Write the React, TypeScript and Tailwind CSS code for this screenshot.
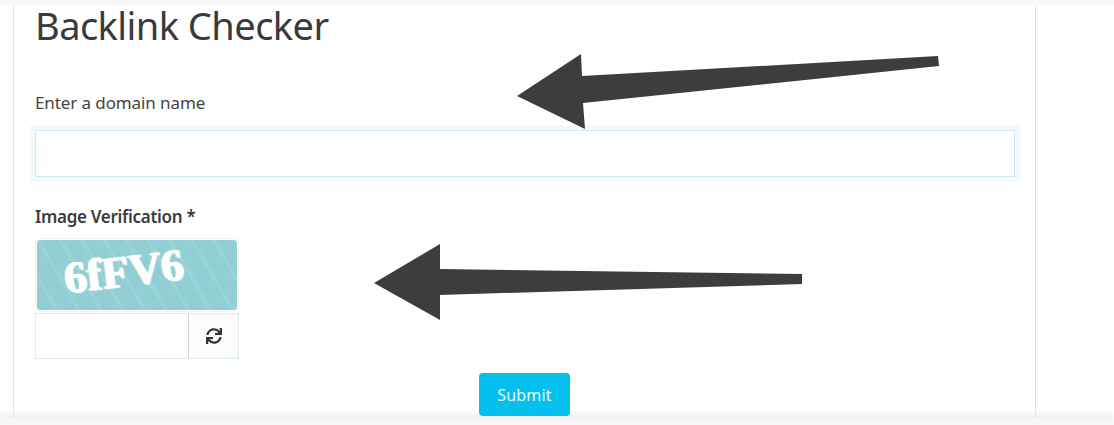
import React from "react";
import { FaSync } from "react-icons/fa";

function Arrows() {
  return (
    <svg className="absolute left-0 top-0 pointer-events-none" width="1114" height="425" viewBox="0 0 1114 425">
      <polygon points="517,96 581,54 582,76 938,56 939,66 583,103 585,129" fill="#3d3d3d" />
      <polygon points="374,283 440,244 440,269 802,274 802,284 440,295 440,320" fill="#3d3d3d" />
    </svg>
  );
}

export default function App() {
  return (
    <div className="relative h-[425px] w-[1114px] overflow-hidden bg-white flex flex-col font-['Noto_Sans','Open_Sans',sans-serif] text-[#3a3a3a]">
      <div className="h-[5px] shrink-0 bg-[#f8f8f9]" />
      <main className="flex-1 min-h-0 ml-[13px] w-[1023px] border-x border-[#e2e2e2] pl-[21px] pr-[20px] flex flex-col items-start">
        <h1 className="text-[38px] leading-[41px] font-normal tracking-[-0.55px] text-[#3a3a3a]">Backlink Checker</h1>
        <label className="mt-[45px] text-[17px] leading-[24px] tracking-[-0.1px] text-[#444]">Enter a domain name</label>
        <input className="mt-[15px] h-[47px] w-full shrink-0 border border-[#cdeaf2] bg-white shadow-[0_0_0_5px_#f1fbff] outline-none" />
        <label className="mt-[28px] text-[17px] leading-[24px] font-semibold tracking-[-0.3px] text-[#3c3c3c]">Image Verification *</label>
        <div className="mt-[11px] w-[204px] flex flex-col">
          <div className="mx-[2px] h-[70px] rounded-[3px] bg-[#92cfd4] bg-[repeating-linear-gradient(60deg,#92cfd4_0px,#92cfd4_15px,#9ad3d8_16px,#9ad3d8_19px)] flex items-center justify-center pr-[26px] pb-[8px] ring-1 ring-[#f3f3f3] ring-offset-1">
            <span className="font-['Liberation_Serif',serif] font-bold text-[45px] leading-none text-white -rotate-[7deg] [text-shadow:1px_1px_1px_#ffffff,-1px_0_1px_#ffffff]">6fFV6</span>
          </div>
          <div className="mt-[3px] flex h-[46px] border border-[#dcebee]">
            <input className="flex-1 min-w-0 bg-white outline-none" />
            <button className="w-[50px] border-l border-[#d9d9d9] bg-[#fcfcfc] flex items-center justify-center">
              <FaSync size={16} color="#333" />
            </button>
          </div>
        </div>
        <button className="mt-[14px] ml-[444px] h-[43px] w-[91px] shrink-0 rounded-[4px] bg-[#05bfec] text-[16px] tracking-[0.2px] text-[#e6f9ff] relative z-10">Submit</button>
      </main>
      <div className="h-[7px] shrink-0 bg-[#f7f7f9] shadow-[0_-4px_6px_#eeeeee]" />
      <Arrows />
    </div>
  );
}
